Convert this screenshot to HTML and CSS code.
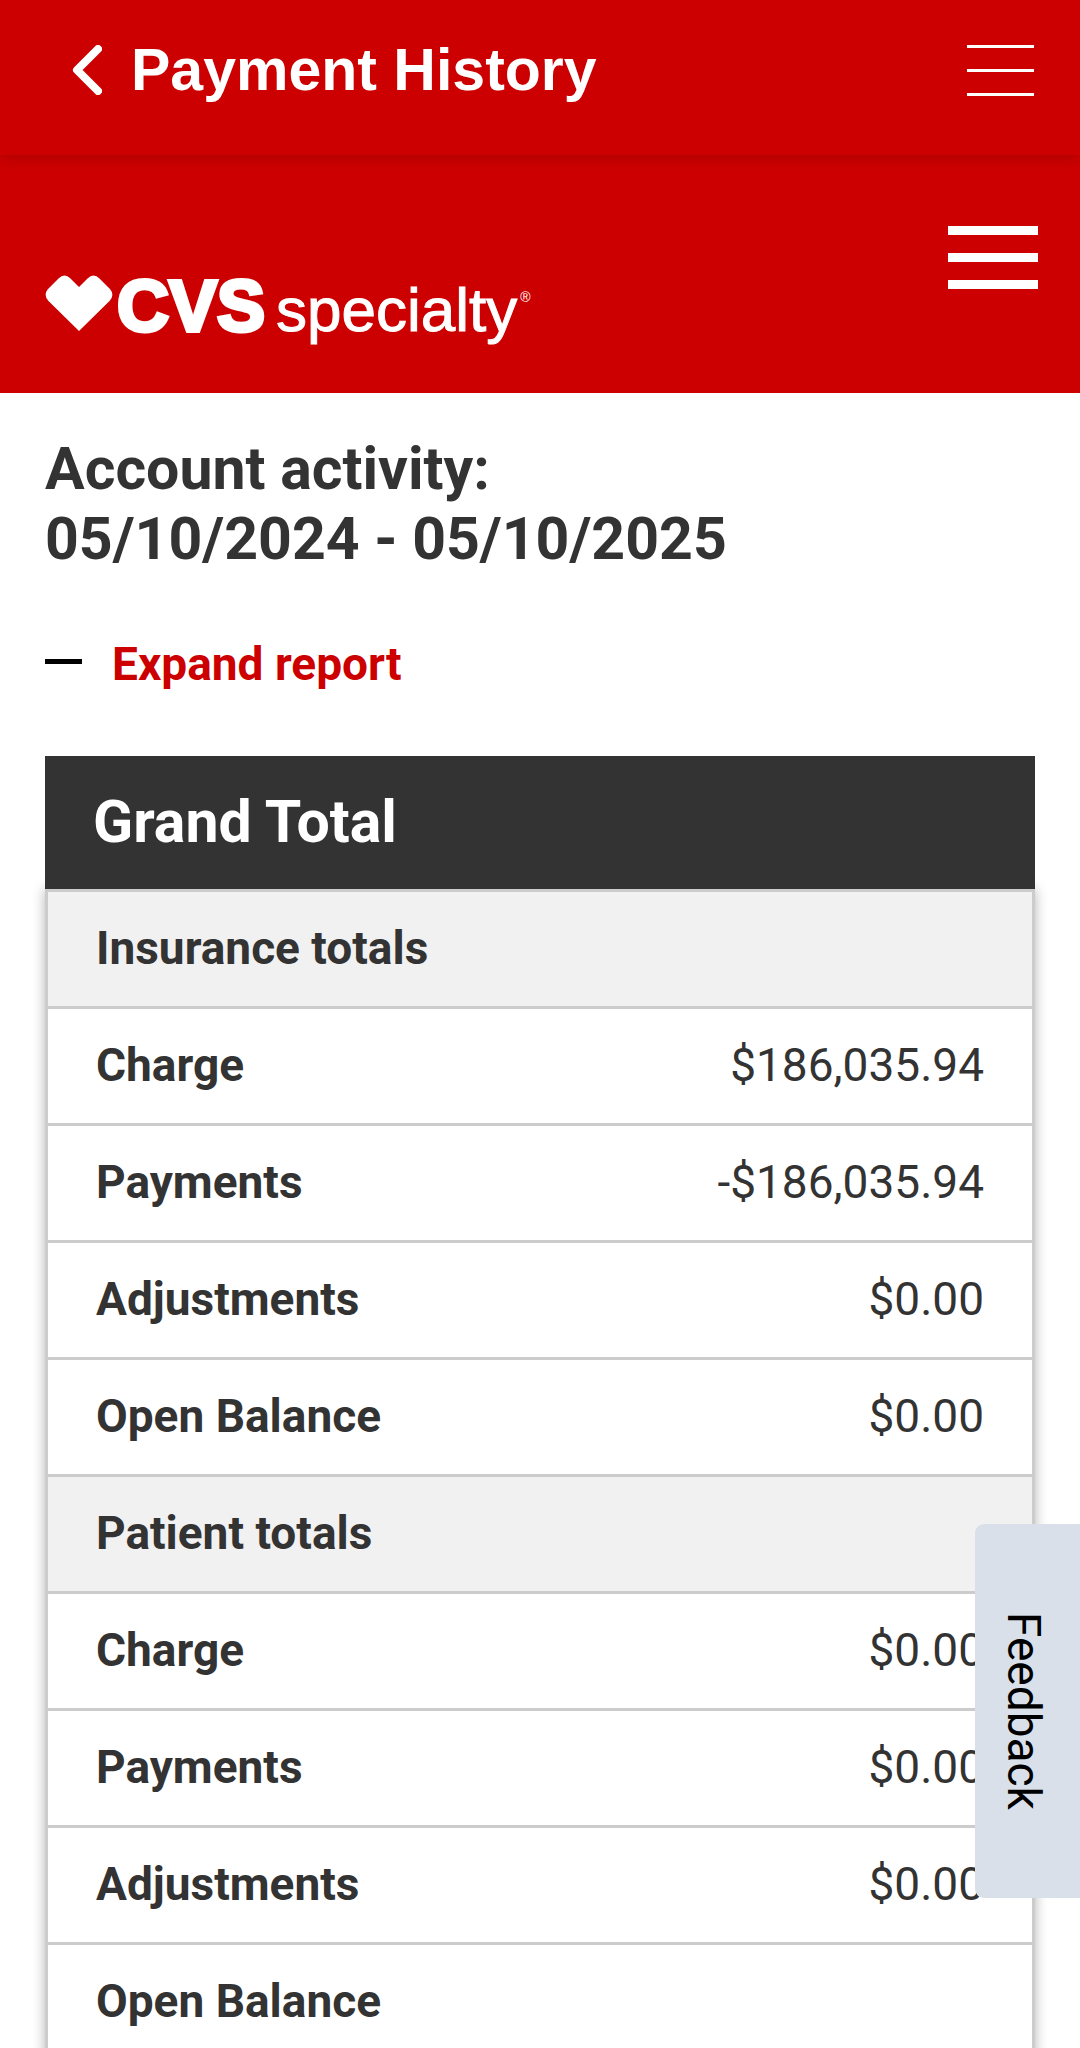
FILE: index.html
```html
<!DOCTYPE html>
<html lang="en">
<head>
<meta charset="utf-8">
<meta name="viewport" content="width=device-width, initial-scale=1">
<title>Payment History</title>
<link rel="stylesheet" href="styles.css">
</head>
<body>
<header class="app-bar">
  <button class="icon-button" type="button" aria-label="Back">
    <svg class="chevron" viewBox="0 0 30 50" aria-hidden="true"><path d="M26 4 5 25l21 21"/></svg>
  </button>
  <h1 class="app-title">Payment History</h1>
  <button class="icon-button app-menu" type="button" aria-label="App menu">
    <svg class="menu-thin" viewBox="0 0 67 51" aria-hidden="true"><path d="M0 0h67v3H0zM0 24h67v3H0zM0 48h67v3H0z"/></svg>
  </button>
</header>
<div class="scroller">
  <div class="site-bar">
    <a class="brand" href="#" aria-label="CVS specialty">
      <svg class="heart" viewBox="0 0 67 56" aria-hidden="true"><path d="M33.500 56 3 26Q-2.500 20 2.500 14L13 3.500Q19-2.500 25 3.500L33.500 12 42 3.500Q48-2.500 54 3.500L64.500 14Q69.500 20 64 26Z"/></svg>
      <span class="brand-name">CVS</span>
      <span class="brand-unit">specialty</span>
      <span class="brand-mark">®</span>
    </a>
    <button class="icon-button site-menu" type="button" aria-label="Site menu">
      <svg class="menu-thick" viewBox="0 0 90 63" aria-hidden="true"><path d="M0 0h90v9H0zM0 27h90v9H0zM0 54h90v9H0z"/></svg>
    </button>
  </div>
  <main class="content">
    <h2 class="period">Account activity:<br>05/10/2024 - 05/10/2025</h2>
    <button class="expand" type="button"><span class="minus"></span>Expand report</button>
    <section class="report">
      <h2 class="report-title">Grand Total</h2>
      <table class="totals">
        <tbody>
          <tr class="group"><th colspan="2" scope="rowgroup">Insurance totals</th></tr>
          <tr><th scope="row">Charge</th><td>$186,035.94</td></tr>
          <tr><th scope="row">Payments</th><td>-$186,035.94</td></tr>
          <tr><th scope="row">Adjustments</th><td>$0.00</td></tr>
          <tr><th scope="row">Open Balance</th><td>$0.00</td></tr>
        </tbody>
        <tbody>
          <tr class="group"><th colspan="2" scope="rowgroup">Patient totals</th></tr>
          <tr><th scope="row">Charge</th><td>$0.00</td></tr>
          <tr><th scope="row">Payments</th><td>$0.00</td></tr>
          <tr><th scope="row">Adjustments</th><td>$0.00</td></tr>
          <tr><th scope="row">Open Balance</th><td></td></tr>
        </tbody>
      </table>
    </section>
  </main>
</div>
<button class="feedback" type="button">Feedback</button>
</body>
</html>
```
FILE: styles.css
```css
* { box-sizing: border-box; }

body {
  margin: 0;
  height: 100vh;
  display: flex;
  flex-direction: column;
  background: #fff;
  color: #333;
  font-family: Roboto, "Liberation Sans", sans-serif;
}

h1, h2 { margin: 0; }

button {
  border: 0;
  padding: 0;
  background: none;
  font: inherit;
  cursor: pointer;
}

.icon-button { display: block; flex: none; }
.icon-button svg { display: block; fill: #fff; }

/* Native app bar */
.app-bar {
  position: relative;
  z-index: 1;
  flex: none;
  display: flex;
  align-items: center;
  padding: 35px 46px 50px 72px;
  background: #c00;
  box-shadow: 0 2px 14px rgba(0, 0, 0, 0.16);
}

.icon-button .chevron {
  width: 30px;
  height: 50px;
  fill: none;
  stroke: #fff;
  stroke-width: 8;
  stroke-linecap: round;
  stroke-linejoin: round;
}

.app-title {
  flex: 1;
  padding-left: 29px;
  color: #fff;
  font: bold 59px/70px "Liberation Sans", Arial, sans-serif;
}

.menu-thin { width: 67px; height: 51px; }

/* Scrolling web content */
.scroller {
  flex: 1;
  min-height: 0;
  overflow-y: auto;
  scrollbar-width: none;
}

.site-bar {
  display: flex;
  align-items: flex-start;
  justify-content: space-between;
  padding: 71px 42px 41px 45px;
  background: #c00;
}

.brand {
  display: flex;
  align-items: baseline;
  padding-top: 38px;
  color: #fff;
  font-family: "Liberation Sans", Arial, sans-serif;
  line-height: 84px;
  text-decoration: none;
}

.heart { width: 68px; height: 56px; margin-bottom: -2px; fill: #fff; }

.brand-name {
  margin-left: 4px;
  font-size: 72px;
  font-weight: bold;
  -webkit-text-stroke: 4px #fff;
}

.brand-unit { margin-left: 11px; font-size: 62px; -webkit-text-stroke: 1px #fff; }
.brand-mark { align-self: flex-start; margin-left: 3px; font-size: 14px; line-height: 66px; }

.menu-thick { width: 90px; height: 63px; }

.content { padding: 41px 45px 60px; }

.period {
  font-size: 59px;
  font-weight: bold;
  line-height: 70px;
}

.expand {
  display: flex;
  align-items: center;
  gap: 30px;
  margin: 59px 0 61px;
  color: #c00;
  font-size: 46px;
  font-weight: bold;
  line-height: 62px;
}

.minus { width: 37px; height: 5px; margin-bottom: 6px; background: #000; }

.report-title {
  position: relative;
  z-index: 1;
  padding: 31px 48px 32px;
  background: #333;
  color: #fff;
  font-size: 59px;
  line-height: 70px;
}

.totals {
  width: 100%;
  border: 3px solid #ccc;
  border-spacing: 0;
  box-shadow: 0 0 12px rgba(0, 0, 0, 0.3);
  font-size: 46px;
  line-height: 54px;
}

.totals th,
.totals td {
  height: 117px;
  padding: 29px 48px 31px;
  border-bottom: 3px solid #ccc;
}

.totals th { text-align: left; }
.totals td { text-align: right; }
.totals .group { background: #f1f1f1; }

/* Tab pinned over the right edge */
.feedback {
  position: fixed;
  z-index: 2;
  right: 0;
  bottom: 150px;
  padding: 88px 27px 88px 19px;
  border-radius: 9px 0 0 9px;
  background: #dae0ea;
  color: #000;
  font-size: 46px;
  line-height: 59px;
  writing-mode: vertical-rl;
}
```
